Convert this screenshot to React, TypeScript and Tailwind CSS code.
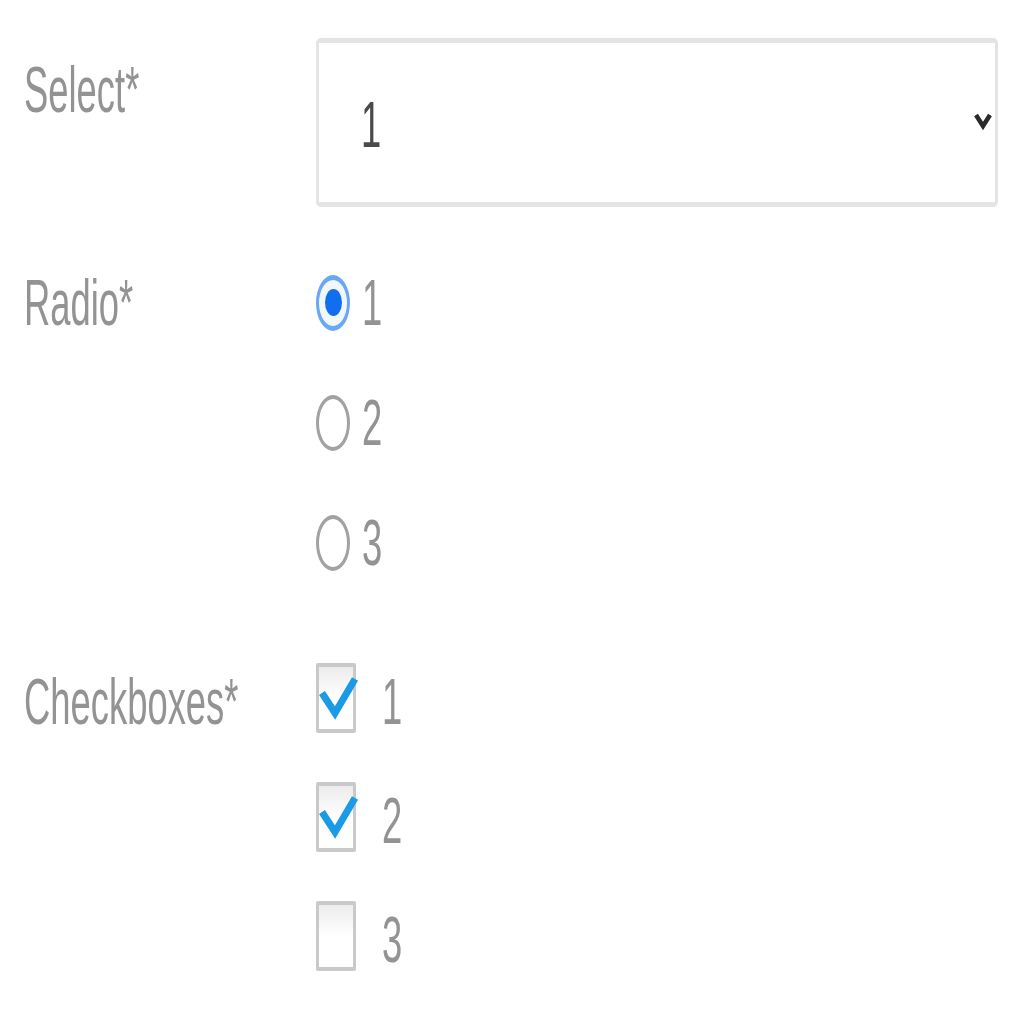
import React from 'react';

// glyphs in the shot are squeezed sideways, so every text run is narrowed
function Narrow({ children, className = '' }: { children: React.ReactNode; className?: string }) {
  return (
    <span className={`inline-block origin-left scale-x-[0.56] whitespace-nowrap ${className}`}>{children}</span>
  );
}

function Radio({ checked }: { checked?: boolean }) {
  if (checked) {
    return (
      <span className="flex h-[56px] w-[34px] shrink-0 items-center justify-center rounded-[50%] border-x-[3px] border-y-[5px] border-[#6aa8f3] bg-[#f2f7fe]">
        <span className="h-[27px] w-[17px] rounded-[50%] bg-[#0f6ff0]" />
      </span>
    );
  }
  return <span className="h-[56px] w-[34px] shrink-0 rounded-[50%] border-x-[3px] border-y-[4px] border-[#a2a2a2] bg-white" />;
}

function Checkbox({ checked }: { checked?: boolean }) {
  return (
    <span className="relative mb-[8px] h-[70px] w-[40px] shrink-0 rounded-[2px] border-x-[3px] border-y-[4px] border-[#c9c9c9] bg-gradient-to-b from-[#ececec] via-white to-white">
      {checked && (
        <svg className="absolute left-[-3px] top-[-4px] overflow-visible" width="40" height="70" viewBox="0 0 40 70">
          <path d="M6 30 L19 50 L39 16" fill="none" stroke="#1b9ae6" strokeWidth="7" strokeLinejoin="miter" />
        </svg>
      )}
    </span>
  );
}

const options = ['1', '2', '3'];

export default function App() {
  return (
    <div className="min-h-screen bg-white px-6 pt-[38px] font-['Liberation_Sans',Arial,sans-serif] text-[65px] leading-[65px] text-[#939393]">
      {/* select */}
      <div className="flex">
        <div className="w-[292px] shrink-0 pt-[19px]">
          <Narrow>Select*</Narrow>
        </div>
        <div className="flex h-[169px] w-[682px] items-center justify-between rounded-[5px] border-x-[3px] border-y-[5px] border-[#e4e4e4] bg-white pl-[42px] pr-[3px]">
          <Narrow className="pt-[4px] text-[#4a4a4a]">1</Narrow>
          <svg className="mb-[6px]" width="18" height="24" viewBox="0 0 18 24">
            <path d="M2 7 L9 18 L16 7" fill="none" stroke="#2a2a2a" strokeWidth="4.5" />
          </svg>
        </div>
      </div>

      {/* radio */}
      <div className="mt-[63px] flex">
        <div className="w-[292px] shrink-0">
          <Narrow>Radio*</Narrow>
        </div>
        <div className="flex flex-col gap-[55px]">
          {options.map((o, i) => (
            <label key={o} className="flex h-[65px] items-center">
              <Radio checked={i === 0} />
              <Narrow className="ml-[12px]">{o}</Narrow>
            </label>
          ))}
        </div>
      </div>

      {/* checkboxes */}
      <div className="mt-[94px] flex">
        <div className="w-[292px] shrink-0">
          <Narrow>Checkboxes*</Narrow>
        </div>
        <div className="flex flex-col gap-[54px]">
          {options.map((o, i) => (
            <label key={o} className="flex h-[65px] items-center">
              <Checkbox checked={i < 2} />
              <Narrow className="ml-[26px]">{o}</Narrow>
            </label>
          ))}
        </div>
      </div>
    </div>
  );
}
